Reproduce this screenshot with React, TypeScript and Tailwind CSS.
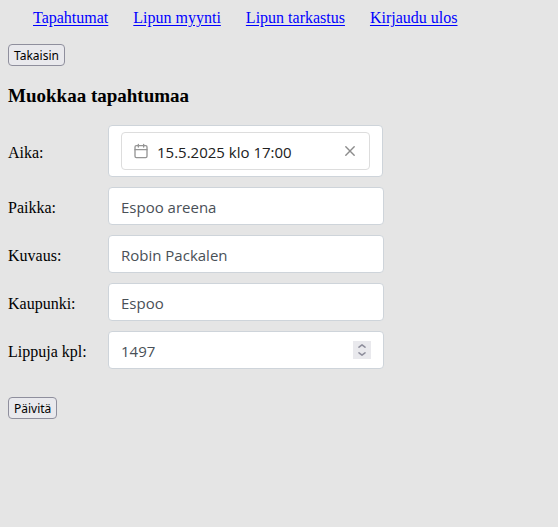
import { useState } from "react";
import type { InputHTMLAttributes } from "react";

const links = ["Tapahtumat", "Lipun myynti", "Lipun tarkastus", "Kirjaudu ulos"];

const fieldClass =
  "block h-[38px] w-full rounded border border-[#ced4da] bg-white px-3 pt-0.5 font-['Open_Sans',sans-serif] text-[15px] text-[#495057] outline-none";

const buttonClass =
  "block h-[22px] rounded-[4px] border border-[#8f8f9d] bg-[#e9e9ed] px-[5px] pt-px font-['Noto_Sans',sans-serif] text-xs leading-5 text-black";

function CalendarIcon() {
  return (
    <svg viewBox="0 0 32 32" className="size-4 shrink-0" fill="none" stroke="#959595" strokeWidth="2.667" strokeLinecap="round" aria-hidden="true">
      <rect x="4" y="5.333" width="24" height="24" rx="2.667" />
      <path d="M10.667 2.667v5.333M21.333 2.667v5.333M4 13.333h24" />
    </svg>
  );
}

function ClearIcon() {
  return (
    <svg viewBox="0 0 16 16" className="size-4" fill="none" stroke="#8c8c8c" strokeWidth="1.4" strokeLinecap="round" aria-hidden="true">
      <path d="M3.8 3.8l8.4 8.4M12.2 3.8l-8.4 8.4" />
    </svg>
  );
}

function Chevron({ up = false }: { up?: boolean }) {
  return (
    <svg viewBox="0 0 8 4" className="h-1 w-2" fill="none" stroke="#8f8f9d" strokeWidth="1.5" strokeLinecap="round" strokeLinejoin="round" aria-hidden="true">
      <path d={up ? "M1 3.2L4 0.8l3 2.4" : "M1 0.8L4 3.2l3-2.4"} />
    </svg>
  );
}

function Row({ id, label, ...props }: { id: string; label: string } & InputHTMLAttributes<HTMLInputElement>) {
  return (
    <div className="flex items-center">
      <label htmlFor={id} className="w-[100px] shrink-0 pt-1">{label}</label>
      <div className="min-w-0 flex-1">
        <input id={id} className={fieldClass} {...props} />
      </div>
    </div>
  );
}

export default function App() {
  const [time, setTime] = useState("15.5.2025 klo 17:00");
  const [count, setCount] = useState(1497);

  return (
    <div className="min-h-screen bg-[#e5e5e5] px-2 pt-2 font-['Liberation_Serif',serif] text-base leading-5 text-black">
      <nav className="flex flex-wrap gap-x-[25px] pl-[25px]">
        {links.map((link) => (
          <a key={link} href="#" className="text-[#0000ff] underline underline-offset-2">{link}</a>
        ))}
      </nav>

      <button type="button" className={`${buttonClass} mt-4`}>Takaisin</button>

      <h3 className="mt-5 text-[19px] leading-5 font-bold">Muokkaa tapahtumaa</h3>

      <form className="mt-[19px] max-w-[376px]" onSubmit={(e) => e.preventDefault()}>
        <div className="flex flex-col gap-[10px]">
          <div className="flex items-center">
            <label htmlFor="aika" className="w-[100px] shrink-0 pt-1">Aika:</label>
            <div className="mr-px min-w-0 flex-1 rounded border border-[#ced4da] bg-white px-3 py-1.5">
              <div className="flex h-[38px] items-center rounded border border-[#dddddd] px-[11px]">
                <CalendarIcon />
                <input
                  id="aika"
                  value={time}
                  onChange={(e) => setTime(e.target.value)}
                  className="ml-2 h-9 min-w-0 flex-1 bg-transparent pt-0.5 font-['Open_Sans',sans-serif] text-[15px] text-[#212121] outline-none"
                />
                <button type="button" aria-label="Tyhjennä" onClick={() => setTime("")}>
                  <ClearIcon />
                </button>
              </div>
            </div>
          </div>
          <Row id="paikka" label="Paikka:" defaultValue="Espoo areena" />
          <Row id="kuvaus" label="Kuvaus:" defaultValue="Robin Packalen" />
          <Row id="kaupunki" label="Kaupunki:" defaultValue="Espoo" />
          <div className="flex items-center">
            <label htmlFor="lippuja" className="w-[100px] shrink-0 pt-1">Lippuja kpl:</label>
            <div className="flex h-[38px] min-w-0 flex-1 items-center rounded border border-[#ced4da] bg-white px-3">
              <input
                id="lippuja"
                type="number"
                value={count}
                onChange={(e) => setCount(Number(e.target.value))}
                className="h-9 min-w-0 flex-1 bg-transparent pt-0.5 font-['Open_Sans',sans-serif] text-[15px] text-[#495057] outline-none [appearance:textfield] [&::-webkit-inner-spin-button]:appearance-none"
              />
              <div className="flex h-[18px] w-[18px] flex-col bg-[#e9e9ed]">
                <button type="button" aria-label="Lisää" onClick={() => setCount(count + 1)} className="flex flex-1 items-end justify-center pb-0.5">
                  <Chevron up />
                </button>
                <button type="button" aria-label="Vähennä" onClick={() => setCount(count - 1)} className="flex flex-1 items-start justify-center pt-0.5">
                  <Chevron />
                </button>
              </div>
            </div>
          </div>
        </div>
        <button type="submit" className={`${buttonClass} mt-7`}>Päivitä</button>
      </form>
    </div>
  );
}
